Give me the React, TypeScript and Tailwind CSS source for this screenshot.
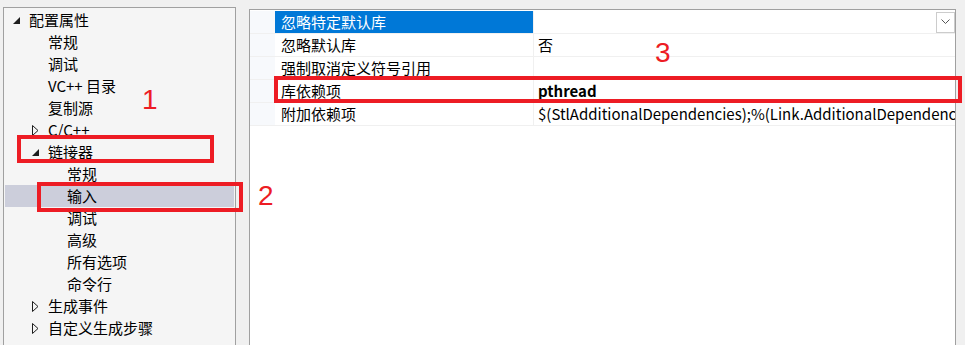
import React from "react";

type TreeItem = { label: string; level: number; arrow?: "open" | "closed"; selected?: boolean };

const tree: TreeItem[] = [
  { label: "配置属性", level: 0, arrow: "open" },
  { label: "常规", level: 1 },
  { label: "调试", level: 1 },
  { label: "VC++ 目录", level: 1 },
  { label: "复制源", level: 1 },
  { label: "C/C++", level: 1, arrow: "closed" },
  { label: "链接器", level: 1, arrow: "open" },
  { label: "常规", level: 2 },
  { label: "输入", level: 2, selected: true },
  { label: "调试", level: 2 },
  { label: "高级", level: 2 },
  { label: "所有选项", level: 2 },
  { label: "命令行", level: 2 },
  { label: "生成事件", level: 1, arrow: "closed" },
  { label: "自定义生成步骤", level: 1, arrow: "closed" },
];

const props = [
  { name: "忽略特定默认库", value: "", active: true },
  { name: "忽略默认库", value: "否" },
  { name: "强制取消定义符号引用", value: "" },
  { name: "库依赖项", value: "pthread", bold: true },
  { name: "附加依赖项", value: "$(StlAdditionalDependencies);%(Link.AdditionalDependencies)" },
];

function Arrow({ kind }: { kind: "open" | "closed" }) {
  if (kind === "open") {
    return (
      <svg width="7" height="7" viewBox="0 0 7 7">
        <path d="M7 0 L7 7 L0 7 Z" fill="#1e1e1e" />
      </svg>
    );
  }
  return (
    <svg width="7" height="11" viewBox="0 0 7 11">
      <path d="M0.5 0.5 L6 5.5 L0.5 10.5 Z" fill="none" stroke="#1e1e1e" strokeWidth="1" />
    </svg>
  );
}

export default function App() {
  return (
    <div
      className="relative w-[965px] h-[345px] overflow-hidden bg-[#f0f0f0] flex items-start text-[15px] text-black"
      style={{ fontFamily: '"Noto Sans CJK SC", "Noto Sans", sans-serif' }}
    >
      {/* 左侧树 */}
      <div className="ml-[3px] mt-[7px] w-[233px] h-[360px] shrink-0 border border-[#a0a0a0] bg-[#f5f5f5] pt-[1px]">
        {tree.map((item, i) => (
          <div
            key={i}
            className={`h-[22px] flex items-center mx-[1px] ${item.selected ? "bg-[#cccedb]" : ""}`}
          >
            <div
              className="flex items-center justify-end pr-[9px] shrink-0"
              style={{ width: 24 + item.level * 19 }}
            >
              {item.arrow && <Arrow kind={item.arrow} />}
            </div>
            <span className="leading-[22px] whitespace-nowrap">{item.label}</span>
          </div>
        ))}
      </div>

      {/* 右侧属性表 */}
      <div className="ml-[13px] mt-[9px] w-[707px] h-[360px] shrink-0 border border-[#a0a0a0] bg-white pt-[1px]">
        {props.map((p, i) => (
          <div key={i} className="h-[23px] flex border-b border-[#f0f0f0]">
            <div className="w-[25px] shrink-0 bg-[#f7f9fc]" />
            <div
              className={`w-[259px] shrink-0 pl-[6px] leading-[22px] whitespace-nowrap border-r border-[#f0f0f0] ${
                p.active ? "bg-[#0078d7] text-white" : ""
              }`}
            >
              {p.name}
            </div>
            <div className="flex-1 min-w-0 flex items-center pl-[4px]">
              <span className={`flex-1 overflow-hidden whitespace-nowrap leading-[22px] ${p.bold ? "font-bold" : ""}`}>
                {p.value}
              </span>
              {p.active && (
                <div className="w-[19px] h-[21px] mr-[0px] border border-[#cccccc] bg-white flex items-center justify-center">
                  <svg width="9" height="6" viewBox="0 0 9 6">
                    <path d="M0.5 0.5 L4.5 4.5 L8.5 0.5" fill="none" stroke="#555" strokeWidth="1" />
                  </svg>
                </div>
              )}
            </div>
          </div>
        ))}
      </div>

      {/* 标注框 */}
      <div className="absolute left-[17px] top-[135px] w-[197px] h-[28px] border-[4px] border-[#ed1c24]" />
      <div className="absolute left-[37px] top-[182px] w-[206px] h-[30px] border-[4px] border-[#ed1c24]" />
      <div className="absolute left-[274px] top-[76px] w-[688px] h-[27px] border-[4px] border-[#ed1c24]" />

      <span
        className="absolute left-[142px] top-[86px] text-[28px] leading-none text-[#ed1c24]"
        style={{ fontFamily: '"Liberation Sans", sans-serif' }}
      >
        1
      </span>
      <span
        className="absolute left-[258px] top-[182px] text-[28px] leading-none text-[#ed1c24]"
        style={{ fontFamily: '"Liberation Sans", sans-serif' }}
      >
        2
      </span>
      <span
        className="absolute left-[655px] top-[39px] text-[28px] leading-none text-[#ed1c24]"
        style={{ fontFamily: '"Liberation Sans", sans-serif' }}
      >
        3
      </span>
    </div>
  );
}
